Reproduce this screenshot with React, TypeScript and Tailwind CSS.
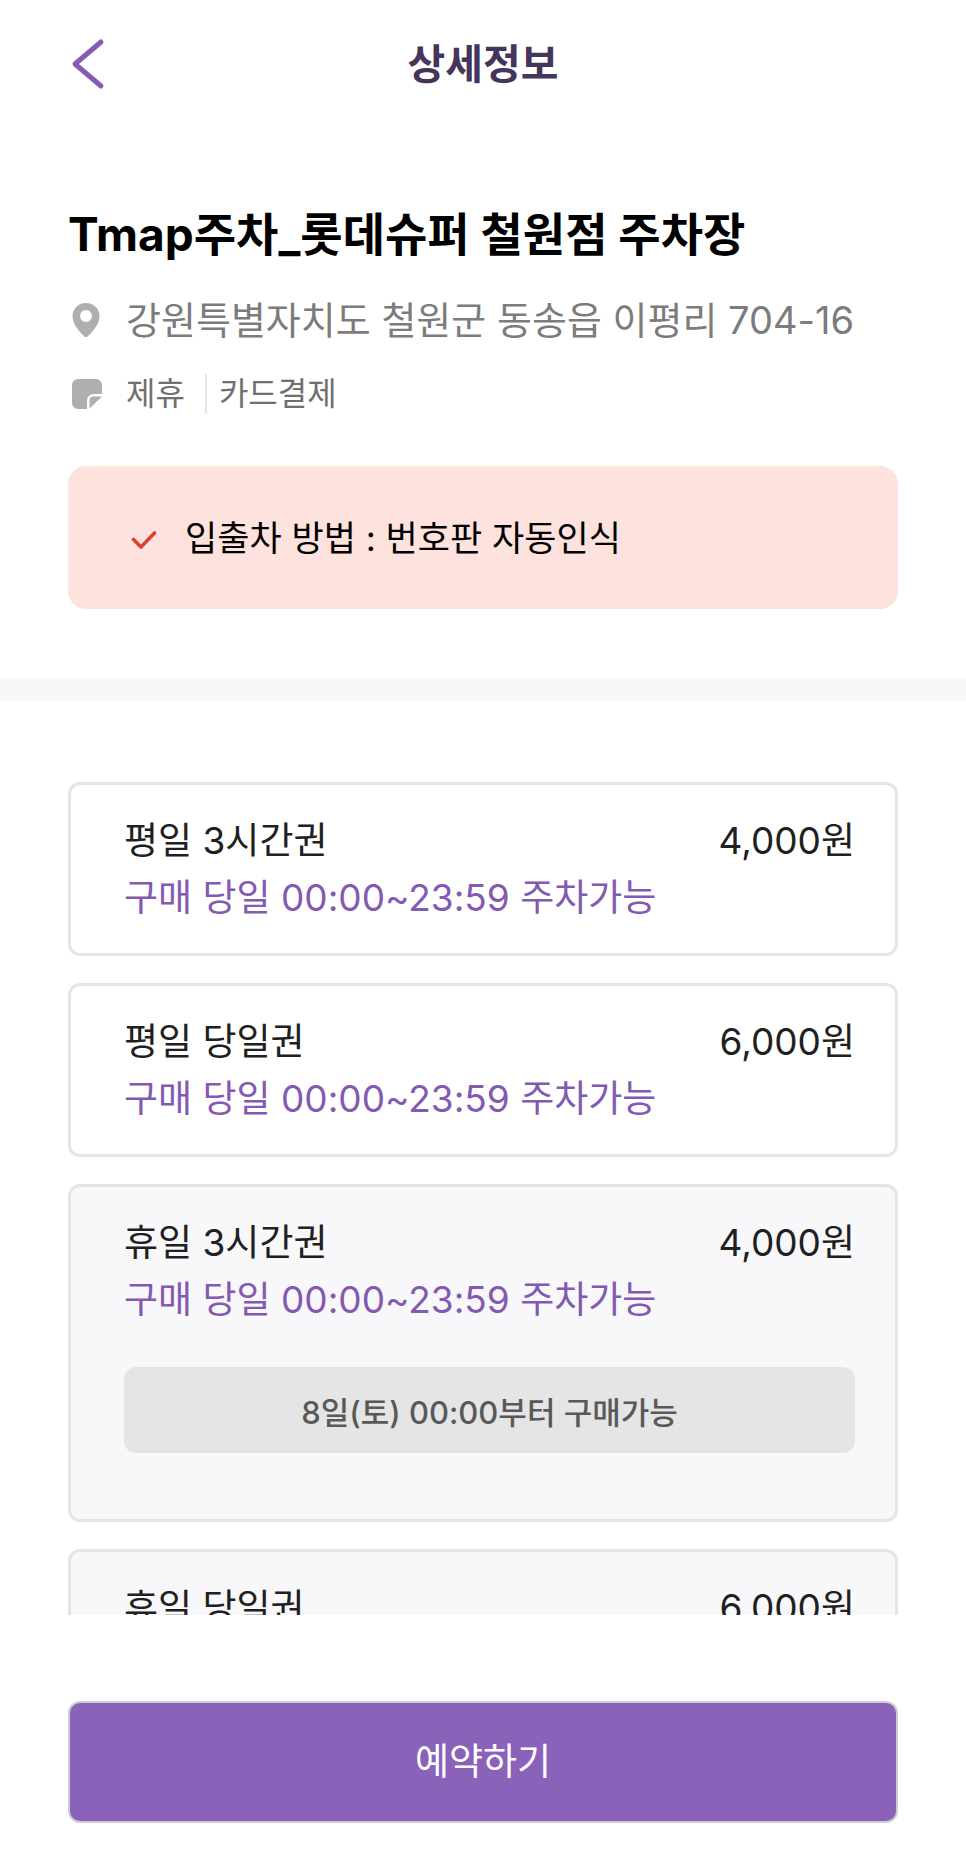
interface Ticket {
  id: string;
  name: string;
  price: number;
  period: string;
  available: boolean;
  notice?: string;
}

const TICKETS: Ticket[] = [
  { id: "weekday-3h", name: "평일 3시간권", price: 4000, period: "구매 당일 00:00~23:59 주차가능", available: true },
  { id: "weekday-day", name: "평일 당일권", price: 6000, period: "구매 당일 00:00~23:59 주차가능", available: true },
  {
    id: "holiday-3h",
    name: "휴일 3시간권",
    price: 4000,
    period: "구매 당일 00:00~23:59 주차가능",
    available: false,
    notice: "8일(토) 00:00부터 구매가능",
  },
  { id: "holiday-day", name: "휴일 당일권", price: 6000, period: "구매 당일 00:00~23:59 주차가능", available: false },
];

function BackIcon() {
  return (
    <svg width="34" height="52" viewBox="0 0 34 52" fill="none" aria-hidden="true">
      <path d="M30 4 4 26l26 22" stroke="#875bb5" strokeWidth="5" strokeLinecap="round" strokeLinejoin="round" />
    </svg>
  );
}

function PinIcon() {
  return (
    <svg width="28" height="34" viewBox="0 0 28 34" fill="#afafaf" aria-hidden="true">
      <path
        fillRule="evenodd"
        d="M14 0C6.4 0 .5 5.8.5 13.2c0 8 6.8 15.4 11.9 20.2a2.3 2.3 0 0 0 3.2 0C20.7 28.6 27.5 21.2 27.5 13.2 27.5 5.8 21.6 0 14 0Zm0 19a6 6 0 1 0 0-12 6 6 0 0 0 0 12Z"
      />
    </svg>
  );
}

function NoteIcon() {
  return (
    <svg width="30" height="30" viewBox="0 0 30 30" fill="#afafaf" aria-hidden="true">
      <path d="M6 0h18a6 6 0 0 1 6 6v9h-8.500A6.500 6.500 0 0 0 15 21.500V30H6a6 6 0 0 1-6-6V6a6 6 0 0 1 6-6Z" />
      <path d="M21.500 17.500H30L17.500 29.500v-8a4 4 0 0 1 4-4Z" />
    </svg>
  );
}

function CheckIcon() {
  return (
    <svg width="26" height="22" viewBox="0 0 26 22" fill="none" aria-hidden="true">
      <path d="m2.5 12.500 7.500 7.500L23.500 6" stroke="#dd4132" strokeWidth="3.6" strokeLinecap="round" strokeLinejoin="round" />
    </svg>
  );
}

function TicketCard({ ticket }: { ticket: Ticket }) {
  return (
    <li
      className={`rounded-xl border-3 border-[#e5e5e5] py-[27px] pr-10 pl-[53px] text-[37px] leading-[57px] ${
        ticket.available ? "bg-white" : "bg-[#f8f8fa]"
      }`}
    >
      <div className="flex justify-between text-[#202020]">
        <h2>{ticket.name}</h2>
        <span>{ticket.price.toLocaleString("en-US")}원</span>
      </div>
      <p className="text-[#8359b1]">{ticket.period}</p>
      {ticket.notice && (
        <button
          type="button"
          disabled
          className="my-[39px] block h-[86px] w-full rounded-xl bg-[#e5e5e5] pt-1 text-[31px] font-medium text-[#595959]"
        >
          {ticket.notice}
        </button>
      )}
    </li>
  );
}

export default function App() {
  return (
    <div className="flex h-screen flex-col bg-white font-['Inter','Noto_Sans_CJK_KR',sans-serif] text-black">
      <header className="grid h-[124px] shrink-0 grid-cols-[1fr_auto_1fr] items-center px-[68px] pt-[3px]">
        <button type="button" aria-label="뒤로" className="justify-self-start pl-[3px]">
          <BackIcon />
        </button>
        <h1 className="text-[41px] leading-[60px] font-bold text-[#45355a]">상세정보</h1>
      </header>

      <main className="min-h-0 flex-1 overflow-y-auto [scrollbar-width:none]">
        <section className="px-[68px] pt-20 pb-[69px]">
          <h2 className="text-[46px] leading-[60px] font-bold">Tmap주차_롯데슈퍼 철원점 주차장</h2>

          <div className="mt-[31px] flex items-center text-[38px] leading-[50px] text-[#7c7c7c]">
            <span className="flex w-[58px] shrink-0 pl-1">
              <PinIcon />
            </span>
            <p>강원특별자치도 철원군 동송읍 이평리 704-16</p>
          </div>

          <div className="mt-[29px] flex items-center text-[32px] leading-10 text-[#707070]">
            <span className="flex w-[58px] shrink-0 pl-1">
              <NoteIcon />
            </span>
            <span>제휴</span>
            <span className="ml-5 border-l-2 border-[#e5e5e5] pl-3">카드결제</span>
          </div>

          <div className="mt-[52px] flex h-[143px] items-center gap-7 rounded-[18px] bg-[#fde2de] pl-[63px]">
            <CheckIcon />
            <p className="text-[35px] leading-[50px]">입출차 방법 : 번호판 자동인식</p>
          </div>
        </section>

        <div className="h-[23px] bg-[#f8f8fa]" />

        <ul className="flex flex-col gap-[27px] px-[68px] pt-[81px] pb-10">
          {TICKETS.map((ticket) => (
            <TicketCard key={ticket.id} ticket={ticket} />
          ))}
        </ul>
      </main>

      <footer className="shrink-0 px-[68px] pt-[86px] pb-[31px]">
        <button
          type="button"
          className="h-[122px] w-full rounded-xl border-2 border-[#cecbd1] bg-[#8b62b9] text-[37px] text-white"
        >
          예약하기
        </button>
      </footer>
    </div>
  );
}
